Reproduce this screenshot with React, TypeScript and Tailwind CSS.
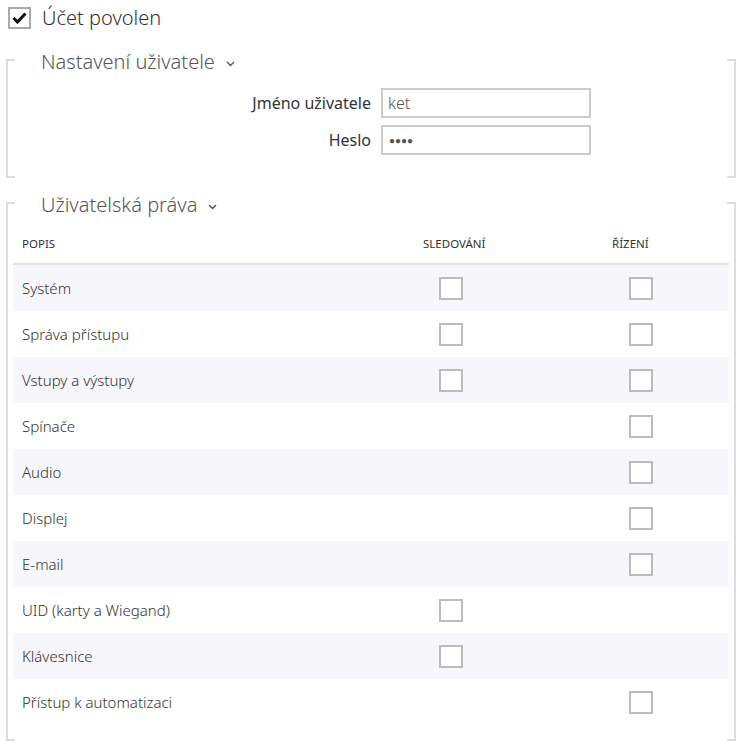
import React from "react";

const rows: { name: string; s: boolean; r: boolean }[] = [
  { name: "Systém", s: true, r: true },
  { name: "Správa přístupu", s: true, r: true },
  { name: "Vstupy a výstupy", s: true, r: true },
  { name: "Spínače", s: false, r: true },
  { name: "Audio", s: false, r: true },
  { name: "Displej", s: false, r: true },
  { name: "E-mail", s: false, r: true },
  { name: "UID (karty a Wiegand)", s: true, r: false },
  { name: "Klávesnice", s: true, r: false },
  { name: "Přístup k automatizaci", s: false, r: true },
];

function Box() {
  return <div className="w-[24px] h-[23px] border-2 border-[#bcbcbc] bg-white" />;
}

function Chevron() {
  return (
    <svg width="9" height="6" viewBox="0 0 9 6" className="ml-[11px] mt-[3px]">
      <path d="M1 1 L4.5 4.5 L8 1" fill="none" stroke="#555" strokeWidth="1.4" />
    </svg>
  );
}

function Fieldset({ title, children }: { title: string; children: React.ReactNode }) {
  return (
    <div className="relative mx-[6px] border-x-2 border-[#dddddd] flex flex-col">
      <div className="absolute left-0 top-0 w-[7px] h-[2px] bg-[#dddddd]" />
      <div className="absolute right-0 top-0 w-[7px] h-[2px] bg-[#dddddd]" />
      <div className="absolute left-0 bottom-0 w-[7px] h-[2px] bg-[#dddddd]" />
      <div className="absolute right-0 bottom-0 w-[7px] h-[2px] bg-[#dddddd]" />
      <div className="-mt-[9px] h-[24px] pl-[33px] flex items-center text-[20px] font-light text-[#555] leading-[24px]">
        <span>{title}</span>
        <Chevron />
      </div>
      {children}
    </div>
  );
}

export default function App() {
  return (
    <div className="w-[742px] min-h-[750px] bg-white font-['Noto_Sans',sans-serif] text-[#333] flow-root">
      <div className="h-[40px] flex items-center pl-[8px] pb-[4px]">
        <div className="w-[23px] h-[22px] border-2 border-[#aaaaaa] flex items-center justify-center">
          <svg width="15" height="12" viewBox="0 0 15 12">
            <path d="M1.5 6 L5.5 10 L13.5 1.5" fill="none" stroke="#111" strokeWidth="3" />
          </svg>
        </div>
        <span className="ml-[11px] text-[20px] text-[#333] font-light">Účet povolen</span>
      </div>

      <div className="pt-[19px]">
        <Fieldset title="Nastavení uživatele">
          <div className="mt-[14px] flex flex-col gap-[7px] pb-[23px]">
            <div className="flex items-center">
              <div className="w-[363px] text-right text-[16px] text-[#333]">Jméno uživatele</div>
              <div className="ml-[10px] w-[210px] h-[30px] border-2 border-[#cccccc] flex items-center pl-[5px] text-[16px] font-light text-[#555]">
                ket
              </div>
            </div>
            <div className="flex items-center">
              <div className="w-[363px] text-right text-[16px] text-[#333]">Heslo</div>
              <div className="ml-[10px] w-[210px] h-[30px] border-2 border-[#cccccc] flex items-center pl-[6px] text-[#555]">
                <span className="text-[10px] tracking-[0px]">●●●●</span>
              </div>
            </div>
          </div>
        </Fieldset>
      </div>

      <div className="pt-[24px]">
        <Fieldset title="Uživatelská práva">
          <div className="mx-[5px] pb-[16px]">
            <div className="h-[48px] flex items-center pt-[7px] border-b-2 border-[#e2e2e2] text-[11.5px] text-[#333] uppercase">
              <div className="w-[410px] pl-[9px]">Popis</div>
              <div className="w-[189px]">Sledování</div>
              <div>Řízení</div>
            </div>
            {rows.map((r, i) => (
              <div
                key={r.name}
                className={`h-[46px] flex items-center text-[15px] font-light text-[#333] ${i % 2 === 0 ? "bg-[#f7f6fa]" : "bg-white"}`}
              >
                <div className="w-[410px] pl-[9px]">{r.name}</div>
                <div className="w-[189px] pl-[16px]">{r.s ? <Box /> : null}</div>
                <div className="pl-[17px]">{r.r ? <Box /> : null}</div>
              </div>
            ))}
          </div>
        </Fieldset>
      </div>
    </div>
  );
}
